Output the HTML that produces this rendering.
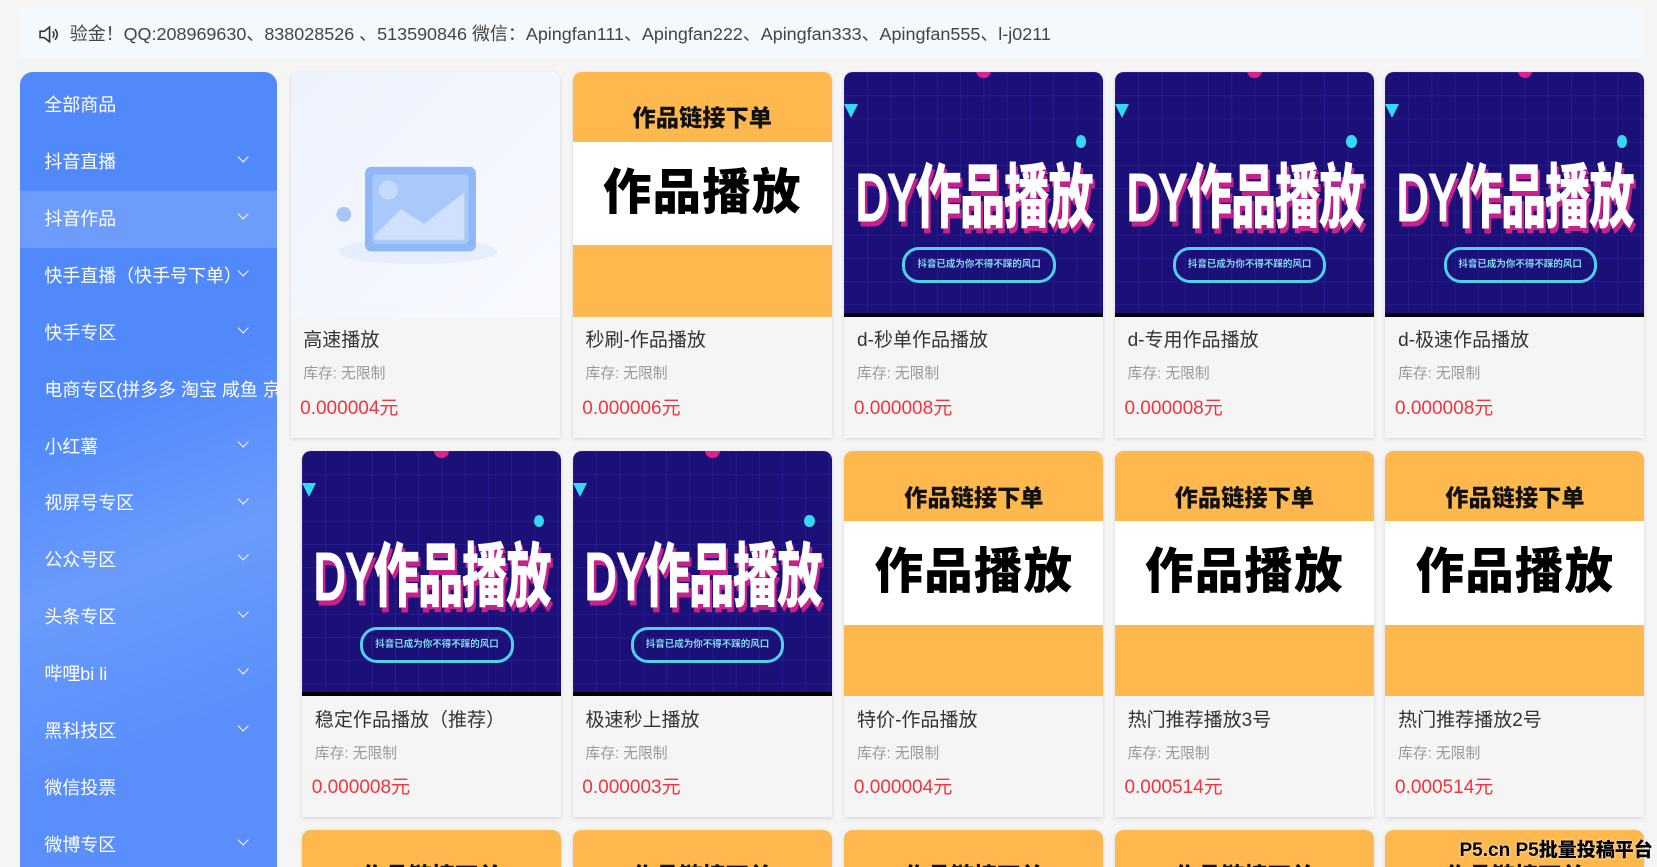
<!DOCTYPE html>
<html><head><meta charset="utf-8"><style>
*{margin:0;padding:0;box-sizing:border-box}
html,body{width:1657px;height:867px;overflow:hidden;background:#f5f5f5}
body{font-family:"Liberation Sans","Noto Sans CJK SC",sans-serif}
#w{width:1568px;height:820px;zoom:1.0568;position:relative;overflow:hidden}
.notice{position:absolute;left:18px;top:8px;width:1537px;height:48px;background:#f3f9fc;border-radius:4px;font-size:17px;color:#444;line-height:50px;padding-left:48px;white-space:nowrap}
.notice svg{position:absolute;left:19px;top:17px}
.side{position:absolute;left:19px;top:68px;width:243px;height:760px;background:linear-gradient(160deg,#5189fb 40%,#6a9bfc 60%,#5a8ffb 80%);border-radius:12px 12px 0 0;overflow:hidden;padding-top:5px}
.mi{height:53.85px;line-height:53.85px;color:#fff;font-size:17px;padding-left:23px;position:relative;white-space:nowrap}
.mi.act{background:rgba(255,255,255,.17)}
.mi .ch{position:absolute;left:207px;top:-6px;font-size:13px}
.mi .ch::after{content:"";display:block;width:7px;height:7px;border-right:1.5px solid #fff;border-bottom:1.5px solid #fff;transform:rotate(45deg);margin-top:24px}
.card{position:absolute;width:245px;background:#f5f5f5;box-shadow:0 1px 4px rgba(0,0,0,.12);border-radius:8px 8px 0 0;overflow:hidden}
.img{height:232px;position:relative;overflow:hidden;border-radius:8px 8px 0 0}
.info{height:114px;padding:0 12px}
.t{font-size:18px;color:#333;padding-top:8px;height:38px}
.s{font-size:14px;color:#999;height:32px;line-height:34px}
.p{font-size:18px;color:#f4333c;line-height:34px;margin-left:-3px}
.or{background:#ffb84d}
.or .b{position:absolute;left:0;right:0;top:66px;height:98px;background:#fff;text-align:center;font-size:46px;font-weight:900;line-height:98px;color:#000;letter-spacing:1px}
.or .h{position:absolute;left:0;right:0;top:26px;text-align:center;font-size:22px;font-weight:900;color:#111}
.dy{background:#1b0f78;background-image:linear-gradient(rgba(80,60,200,.25) 1px,transparent 1px),linear-gradient(90deg,rgba(80,60,200,.25) 1px,transparent 1px);background-size:22px 22px;border-bottom:4px solid #000}
.dy .big{position:absolute;left:-40px;right:-40px;top:70px;text-align:center;color:#fff;font-size:60px;font-weight:900;letter-spacing:-2px;white-space:nowrap;text-shadow:3px 4px 0 #c8208c;transform:scale(0.72,1.1)}
.dy .pill{position:absolute;left:55px;width:145px;top:166px;height:34px;border:3px solid #4fd1e8;border-radius:16px;color:#7ed9ee;font-size:9px;white-space:nowrap;text-align:center;line-height:28px;font-weight:bold}
.dy .c1{position:absolute;left:125px;top:-8px;width:14px;height:14px;border-radius:50%;background:#e0208f}
.dy .c2{position:absolute;right:16px;top:60px;width:10px;height:12px;border-radius:50%;background:#35d8ee}
.dy .tr{position:absolute;left:0;top:30px;width:0;height:0;border-left:7px solid transparent;border-right:7px solid transparent;border-top:14px solid #35d8ee}
.ph{background:linear-gradient(135deg,#eef2fd,#f8faff)}
.wm{position:absolute;right:4px;bottom:4px;font-size:18px;font-weight:900;color:#000;text-shadow:0 0 2px #fff}
</style></head><body><div id="w">
<div class="notice"><svg width="18" height="16" viewBox="0 0 18 16" fill="none" stroke="#333" stroke-width="1.5"><path d="M1 5h4l5-4v14l-5-4H1z"/><path d="M13 5c1.5 1.5 1.5 4.5 0 6M15 3c3 3 3 7 0 10"/></svg>验金！QQ:208969630、838028526 、513590846 微信：Apingfan111、Apingfan222、Apingfan333、Apingfan555、l-j0211</div>
<div class="side">
<div class="mi">全部商品</div>
<div class="mi">抖音直播<span class="ch"></span></div>
<div class="mi act">抖音作品<span class="ch"></span></div>
<div class="mi">快手直播（快手号下单）<span class="ch"></span></div>
<div class="mi">快手专区<span class="ch"></span></div>
<div class="mi">电商专区(拼多多 淘宝 咸鱼 京东</div>
<div class="mi">小红薯<span class="ch"></span></div>
<div class="mi">视屏号专区<span class="ch"></span></div>
<div class="mi">公众号区<span class="ch"></span></div>
<div class="mi">头条专区<span class="ch"></span></div>
<div class="mi">哔哩bi li<span class="ch"></span></div>
<div class="mi">黑科技区<span class="ch"></span></div>
<div class="mi">微信投票</div>
<div class="mi">微博专区<span class="ch"></span></div>
</div>

<div class="card" style="left:275px;top:68px;width:255px"><div class="img ph"><svg style="position:absolute;left:35px;top:75px" width="170" height="110" viewBox="0 0 170 110"><ellipse cx="85" cy="95" rx="75" ry="12" fill="#e6edfb"/><rect x="35" y="15" width="105" height="80" rx="6" fill="#8fb8f7"/><rect x="42" y="22" width="91" height="66" rx="4" fill="#a8c9fa"/><circle cx="57" cy="37" r="9" fill="#c7dcfc"/><path d="M44 80l25-25 22 14 38-30v45H44z" fill="#cfe1fc"/><circle cx="15" cy="60" r="7" fill="#a6c6f6"/></svg></div><div class="info"><div class="t">高速播放</div><div class="s">库存: 无限制</div><div class="p">0.000004元</div></div></div>

<div class="card" style="left:542px;top:68px"><div class="img or"><div class="h">作品链接下单</div><div class="b">作品播放</div></div><div class="info"><div class="t">秒刷-作品播放</div><div class="s">库存: 无限制</div><div class="p">0.000006元</div></div></div>
<div class="card" style="left:799px;top:68px"><div class="img dy"><div class="c1"></div><div class="c2"></div><div class="tr"></div><div class="big">DY作品播放</div><div class="pill">抖音已成为你不得不踩的风口</div></div><div class="info"><div class="t">d-秒单作品播放</div><div class="s">库存: 无限制</div><div class="p">0.000008元</div></div></div>
<div class="card" style="left:1055px;top:68px"><div class="img dy"><div class="c1"></div><div class="c2"></div><div class="tr"></div><div class="big">DY作品播放</div><div class="pill">抖音已成为你不得不踩的风口</div></div><div class="info"><div class="t">d-专用作品播放</div><div class="s">库存: 无限制</div><div class="p">0.000008元</div></div></div>
<div class="card" style="left:1311px;top:68px"><div class="img dy"><div class="c1"></div><div class="c2"></div><div class="tr"></div><div class="big">DY作品播放</div><div class="pill">抖音已成为你不得不踩的风口</div></div><div class="info"><div class="t">d-极速作品播放</div><div class="s">库存: 无限制</div><div class="p">0.000008元</div></div></div>

<div class="card" style="left:286px;top:427px"><div class="img dy"><div class="c1"></div><div class="c2"></div><div class="tr"></div><div class="big">DY作品播放</div><div class="pill">抖音已成为你不得不踩的风口</div></div><div class="info"><div class="t">稳定作品播放（推荐）</div><div class="s">库存: 无限制</div><div class="p">0.000008元</div></div></div>
<div class="card" style="left:542px;top:427px"><div class="img dy"><div class="c1"></div><div class="c2"></div><div class="tr"></div><div class="big">DY作品播放</div><div class="pill">抖音已成为你不得不踩的风口</div></div><div class="info"><div class="t">极速秒上播放</div><div class="s">库存: 无限制</div><div class="p">0.000003元</div></div></div>
<div class="card" style="left:799px;top:427px"><div class="img or"><div class="h">作品链接下单</div><div class="b">作品播放</div></div><div class="info"><div class="t">特价-作品播放</div><div class="s">库存: 无限制</div><div class="p">0.000004元</div></div></div>
<div class="card" style="left:1055px;top:427px"><div class="img or"><div class="h">作品链接下单</div><div class="b">作品播放</div></div><div class="info"><div class="t">热门推荐播放3号</div><div class="s">库存: 无限制</div><div class="p">0.000514元</div></div></div>
<div class="card" style="left:1311px;top:427px"><div class="img or"><div class="h">作品链接下单</div><div class="b">作品播放</div></div><div class="info"><div class="t">热门推荐播放2号</div><div class="s">库存: 无限制</div><div class="p">0.000514元</div></div></div>

<div class="card" style="left:286px;top:785px;height:35px"><div class="img or"><div class="h">作品链接下单</div></div></div>
<div class="card" style="left:542px;top:785px;height:35px"><div class="img or"><div class="h">作品链接下单</div></div></div>
<div class="card" style="left:799px;top:785px;height:35px"><div class="img or"><div class="h">作品链接下单</div></div></div>
<div class="card" style="left:1055px;top:785px;height:35px"><div class="img or"><div class="h">作品链接下单</div></div></div>
<div class="card" style="left:1311px;top:785px;height:35px"><div class="img or"><div class="h">作品链接下单</div></div></div>
<div class="wm">P5.cn P5批量投稿平台</div>
</div></body></html>
